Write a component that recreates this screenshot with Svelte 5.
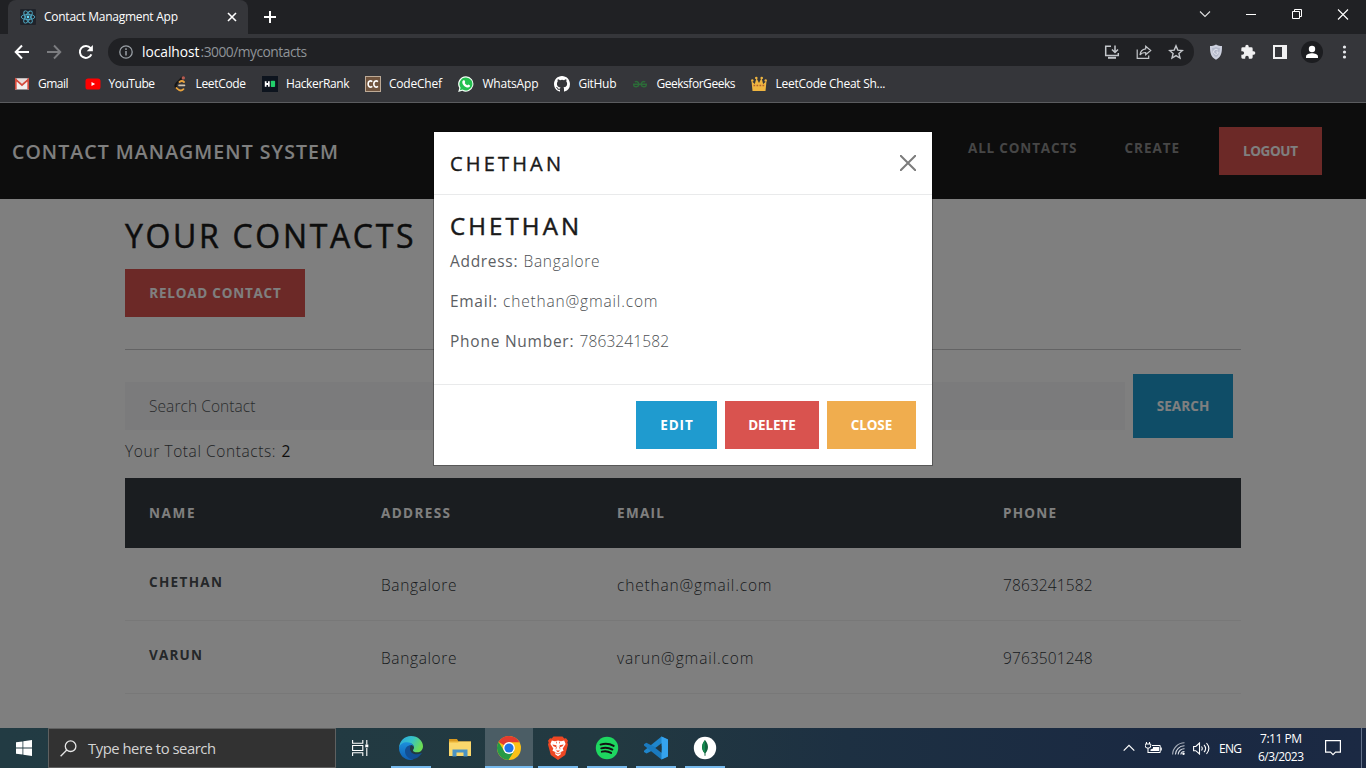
<script>
  // Tracks a text run so that it occupies the given width in pixels.
  function fit(node, width) {
    node.style.letterSpacing = '0px';
    const natural = node.getBoundingClientRect().width;
    const gaps = node.textContent.length - 1;
    const spacing = (width - natural) / gaps;
    node.style.letterSpacing = spacing.toFixed(3) + 'px';
    node.style.marginRight = (-spacing).toFixed(3) + 'px';
  }

  const bookmarks = [
    { id: 'gmail', label: 'Gmail', w: 30.500, gap: 16 },
    { id: 'youtube', label: 'YouTube', w: 46.500, gap: 16.500 },
    { id: 'leetcode', label: 'LeetCode', w: 50.500, gap: 16 },
    { id: 'hackerrank', label: 'HackerRank', w: 63.500, gap: 15.500 },
    { id: 'codechef', label: 'CodeChef', w: 53, gap: 16.500 },
    { id: 'whatsapp', label: 'WhatsApp', w: 56, gap: 16 },
    { id: 'github', label: 'GitHub', w: 38, gap: 16 },
    { id: 'gfg', label: 'GeeksforGeeks', w: 79, gap: 16 },
    { id: 'crown', label: 'LeetCode Cheat Sh...', w: 110, gap: 0 }
  ];

  const columns = [
    { label: 'NAME', w: 45.500 },
    { label: 'ADDRESS', w: 69 },
    { label: 'EMAIL', w: 47 },
    { label: 'PHONE', w: 53 }
  ];

  const rows = [
    { name: 'CHETHAN', nw: 73, address: 'Bangalore', email: 'chethan@gmail.com', ew: 154.500, phone: '7863241582' },
    { name: 'VARUN', nw: 53, address: 'Bangalore', email: 'varun@gmail.com', ew: 136.500, phone: '9763501248' }
  ];

  const details = [
    { label: 'Address:', lw: 67.500, value: 'Bangalore', vw: 76 },
    { label: 'Email:', lw: 47, value: 'chethan@gmail.com', vw: 154.500 },
    { label: 'Phone Number:', lw: 123.500, value: '7863241582', vw: 89.500 }
  ];

  const apps = ['edge', 'files', 'chrome', 'brave', 'spotify', 'vscode', 'mongo'];
</script>

<div class="screen">
  <header class="browser">
    <div class="tabs">
      <div class="tab">
        <svg class="fav" width="16" height="16" viewBox="0 0 16 16">
          <rect width="16" height="16" rx="1" fill="#20232a" />
          <g fill="none" stroke="#4fa9c4" stroke-width=".9">
            <ellipse cx="8" cy="8" rx="6.8" ry="2.6" />
            <ellipse cx="8" cy="8" rx="6.8" ry="2.6" transform="rotate(60 8 8)" />
            <ellipse cx="8" cy="8" rx="6.8" ry="2.6" transform="rotate(120 8 8)" />
          </g>
          <circle cx="8" cy="8" r="1.4" fill="#61dafb" />
        </svg>
        <span class="title" use:fit={134}>Contact Managment App</span>
        <svg class="tabx" width="10" height="10" viewBox="0 0 10 10"><path d="M1 1l8 8M9 1L1 9" stroke="#fff" stroke-width="1.6" /></svg>
      </div>
      <svg class="plus" width="14" height="14" viewBox="0 0 14 14"><path d="M7 1v12M1 7h12" stroke="#fff" stroke-width="2" /></svg>
      <div class="win">
        <svg width="46" height="30" viewBox="0 0 46 30"><path d="M18 11.5l5 5 5-5" fill="none" stroke="#dfdfe0" stroke-width="1.1" /></svg>
        <svg width="46" height="30" viewBox="0 0 46 30"><path d="M18 14.5h10" stroke="#fff" /></svg>
        <svg width="46" height="30" viewBox="0 0 46 30"><path d="M18.5 11.5h7v7h-7zM20.500 11.500v-2h7v7h-2" fill="none" stroke="#fff" /></svg>
        <svg width="46" height="30" viewBox="0 0 46 30"><path d="M18 9.500l10 10M28 9.500l-10 10" stroke="#fff" stroke-width="1.100" /></svg>
      </div>
    </div>

    <div class="toolbar">
      <svg class="tool" width="16" height="16" viewBox="0 0 16 16"><path d="M15 8H2.500M8 1.500L1.700 8 8 14.500" fill="none" stroke="#fff" stroke-width="2" /></svg>
      <svg class="tool" width="16" height="16" viewBox="0 0 16 16"><path d="M1 8h12.500M8 1.500L14.300 8 8 14.500" fill="none" stroke="#7c7d80" stroke-width="1.900" /></svg>
      <svg class="tool" width="16" height="16" viewBox="0 0 16 16"><path d="M13.400 10.300A6 6 0 1 1 12.600 4.200" fill="none" stroke="#fff" stroke-width="2" /><path d="M14.900 1v6.200H8.700z" fill="#fff" /></svg>
      <div class="omnibox">
        <svg width="14" height="14" viewBox="0 0 14 14"><circle cx="7" cy="7" r="6.200" fill="none" stroke="#9aa0a6" stroke-width="1.300" /><path d="M7 6v4.500M7 3.300v1.600" stroke="#9aa0a6" stroke-width="1.500" /></svg>
        <span class="host" use:fit={57.500}>localhost</span><span class="path" use:fit={106.500}>:3000/mycontacts</span>
        <div class="omni-icons">
          <svg width="16" height="16" viewBox="0 0 16 16" fill="none" stroke="#c4c7cb" stroke-width="1.500"><path d="M7 2.200H1.700v9.300h12.600V9" /><path d="M4 13.800h8" stroke-width="2" /><path d="M11 1.500v6.500M8 5.500l3 3 3-3" /></svg>
          <svg width="16" height="16" viewBox="0 0 16 16" fill="none" stroke="#c4c7cb" stroke-width="1.200"><path d="M1.200 5.500v8.800h11.500V11.500" /><path d="M9.700 2.200l5 4.300-5 4.200V8.500c-2.700 0-4.500.7-5.700 2.500.3-3.500 2.400-5.700 5.700-6.200z" /></svg>
          <svg width="16" height="16" viewBox="0 0 16 16" fill="none" stroke="#c4c7cb" stroke-width="1.400"><path d="M8 1.900l1.800 4.200 4.600.4-3.500 3 1.100 4.500L8 11.600 4 14l1.100-4.500-3.500-3 4.600-.4z" /></svg>
        </div>
      </div>
      <div class="ext">
        <svg width="16" height="16" viewBox="0 0 16 16"><path d="M8 .4c2 1.400 4 1.700 6 1.700 0 6-.4 11-6 13.700C2.400 13.100 2 8.100 2 2.100c2 0 4-.3 6-1.700z" fill="#ccd0de" /><path d="M8 3c1.200.6 2.600.9 3.900.9-.1 4.300-.9 7.500-3.900 9.300-3-1.800-3.800-5-3.900-9.300C5.400 3.900 6.800 3.600 8 3z" fill="#b4b9ca" /><path d="M9.800 6A2.500 2.500 0 1 0 10 9.400V8H8.200" fill="none" stroke="#e6e9f2" stroke-width=".9" /></svg>
        <svg width="16" height="16" viewBox="0 0 24 24"><path d="M20.500 11H19V7a2 2 0 0 0-2-2h-4V3.500a2.500 2.500 0 0 0-5 0V5H4a2 2 0 0 0-2 2v3.800h1.500a2.700 2.700 0 0 1 0 5.400H2V20a2 2 0 0 0 2 2h3.800v-1.500a2.700 2.700 0 0 1 5.400 0V22H17a2 2 0 0 0 2-2v-4h1.500a2.500 2.500 0 0 0 0-5z" fill="#f1f1f2" /></svg>
        <svg width="16" height="16" viewBox="0 0 16 16"><path d="M1 1h14v14H1zM3 3v10h7V3z" fill="#f1f1f2" fill-rule="evenodd" /></svg>
        <svg class="avatar" width="22" height="22" viewBox="0 0 22 22"><circle cx="11" cy="11" r="11" fill="#1c1d20" /><circle cx="11" cy="8" r="3.200" fill="#fff" /><path d="M5 17v-1.400c0-2.200 3.500-3.300 6-3.300s6 1.100 6 3.300V17z" fill="#fff" /></svg>
        <svg width="16" height="16" viewBox="0 0 16 16" fill="#e8eaed"><circle cx="8.500" cy="3" r="1.600" /><circle cx="8.500" cy="8" r="1.600" /><circle cx="8.500" cy="13" r="1.600" /></svg>
      </div>
    </div>

    <div class="bookmarks">
      {#each bookmarks as b}
        <span class="bm" style:margin-right="{b.gap}px">
          <svg width="16" height="16" viewBox="0 0 16 16">
            {#if b.id === 'gmail'}
              <path d="M1 2.500h14v11H1z" fill="#f3efee" /><path d="M1.800 13.500V3.500L8 9l6.200-5.500v10" fill="none" stroke="#d54b3d" stroke-width="1.700" /><path d="M2.500 2.500h11L8 7.500z" fill="#e9dedc" />
            {:else if b.id === 'youtube'}
              <rect x=".5" y="2.500" width="15" height="11" rx="2.600" fill="#f00" /><path d="M6.500 6v4l3.600-2z" fill="#fff" />
            {:else if b.id === 'leetcode'}
              <path d="M10.300 1.500L4.500 7.400c-1.400 1.500-1.400 3 0 4.400l1.500 1.500" fill="none" stroke="#171717" stroke-width="2" stroke-linecap="round" /><path d="M12 6C10.800 4.800 9 4.800 7.500 6M4.500 12l1.300 1.200c1.800 1.700 4 1.700 5.700-.1" fill="none" stroke="#e8a23c" stroke-width="1.800" stroke-linecap="round" /><path d="M7 9.400h5.500" stroke="#d5c5ae" stroke-width="1.600" stroke-linecap="round" /><circle cx="11.300" cy="1.900" r="1.700" fill="#b75b50" />
            {:else if b.id === 'hackerrank'}
              <rect width="16" height="16" fill="#0d141e" /><path d="M2.800 5.200h1.700v1.900H6V5.200h1.700v5.600H6V9H4.500v1.800H2.800z" fill="#fff" /><rect x="8.800" y="4.800" width="4.300" height="6.200" rx=".8" fill="#21cf6a" />
            {:else if b.id === 'codechef'}
              <rect x=".5" y=".5" width="15" height="15" fill="#70543e" stroke="#bdaa96" /><path d="M7.300 5.600C5 4 3.100 5.500 3.100 8s1.900 4 4.200 2.400M13 5.600C10.700 4 8.800 5.500 8.800 8s1.900 4 4.200 2.400" fill="none" stroke="#fff" stroke-width="1.600" />
            {:else if b.id === 'whatsapp'}
              <path d="M8 .2a7.700 7.700 0 1 1-3.700 14.600L.2 15.900l1.100-4A7.700 7.700 0 0 1 8 .2z" fill="#f4fff7" /><path d="M8 1.500a6.500 6.500 0 1 1-3.400 12.100l-2.700.7.700-2.600A6.500 6.500 0 0 1 8 1.500z" fill="#24c050" /><path d="M5.600 4.200c.5-.2.800 0 1 .4l.6 1.300c.1.500-.6.900-.5 1.200.5 1 1.300 1.800 2.400 2.200.5.100.8-.9 1.200-.8l1.500.8c.7.700-.4 2.400-1.900 2.300-2.800-.3-5.800-3.200-5.600-5.700.1-.8.800-1.500 1.300-1.700z" fill="#fff" />
            {:else if b.id === 'github'}
              <path d="M8 0C3.580 0 0 3.580 0 8c0 3.540 2.290 6.530 5.470 7.590.4.070.55-.17.55-.38 0-.19-.01-.82-.01-1.490-2.010.37-2.530-.49-2.690-.94-.09-.23-.48-.94-.82-1.130-.28-.15-.68-.52-.01-.53.63-.01 1.080.58 1.230.82.72 1.210 1.870.87 2.330.66.07-.52.28-.87.51-1.070-1.780-.2-3.640-.89-3.640-3.950 0-.87.31-1.590.82-2.150-.08-.2-.36-1.020.08-2.120 0 0 .67-.21 2.200.82a7.600 7.600 0 0 1 4 0c1.530-1.040 2.200-.82 2.200-.82.44 1.100.16 1.920.08 2.120.51.56.82 1.270.82 2.150 0 3.070-1.870 3.750-3.650 3.950.29.25.54.73.54 1.480 0 1.070-.01 1.930-.01 2.200 0 .21.15.46.55.38A8.010 8.010 0 0 0 16 8c0-4.420-3.580-8-8-8z" fill="#fff" />
            {:else if b.id === 'gfg'}
              <path d="M2.800 5.800c2-.9 4 .3 4 2.500 0 2.800-4.500 3.500-5.300.7M13.200 5.800c-2-.9-4 .3-4 2.500 0 2.800 4.500 3.500 5.300.7M1 8.300h14" fill="none" stroke="#2c6b38" stroke-width="1.400" />
            {:else}
              <path d="M1.500 15L.5 5l3.300 3L5.500 2l2.500 5 2.500-5 1.700 6 3.300-3-1 10z" fill="#efb540" /><circle cx="5.300" cy="2" r="1.300" fill="#efb540" /><circle cx="10.700" cy="2" r="1.300" fill="#efb540" /><circle cx="1.300" cy="4.500" r="1.200" fill="#efb540" /><circle cx="14.700" cy="4.500" r="1.200" fill="#efb540" /><path d="M2.500 9.500h11" stroke="#b0612e" stroke-width="1.500" stroke-dasharray="1.700 1.300" />
            {/if}
          </svg>
          <span use:fit={b.w}>{b.label}</span>
        </span>
      {/each}
    </div>
  </header>

  <main class="page">
    <nav class="navbar">
      <span class="brand" use:fit={326}>CONTACT MANAGMENT SYSTEM</span>
      <span class="link all" use:fit={108.500}>ALL CONTACTS</span>
      <span class="link" use:fit={54.500}>CREATE</span>
      <button class="btn danger logout"><span use:fit={55}>LOGOUT</span></button>
    </nav>

    <section class="content">
      <h1><span use:fit={288.500}>YOUR CONTACTS</span></h1>
      <button class="btn danger reload"><span use:fit={131.500}>RELOAD CONTACT</span></button>
      <hr />
      <div class="search">
        <div class="input"><span use:fit={106.500}>Search Contact</span></div>
        <button class="btn info find"><span use:fit={52.500}>SEARCH</span></button>
      </div>
      <p class="total"><span use:fit={150.500}>Your Total Contacts:</span><b>2</b></p>
      <div class="table">
        <div class="tr head">
          {#each columns as c}<span><span use:fit={c.w}>{c.label}</span></span>{/each}
        </div>
        {#each rows as r}
          <div class="tr">
            <span class="name"><span use:fit={r.nw}>{r.name}</span></span>
            <span><span use:fit={75.500}>{r.address}</span></span>
            <span><span use:fit={r.ew}>{r.email}</span></span>
            <span><span use:fit={89.500}>{r.phone}</span></span>
          </div>
        {/each}
      </div>
    </section>

    <div class="backdrop">
      <div class="modal">
        <div class="modal-head">
          <span use:fit={111}>CHETHAN</span>
          <svg width="16" height="16" viewBox="0 0 16 16"><path d="M.7.700l14.600 14.600M15.300.7L.7 15.300" stroke="#7c7c7c" stroke-width="2" stroke-linecap="round" /></svg>
        </div>
        <div class="modal-body">
          <h4><span use:fit={129}>CHETHAN</span></h4>
          {#each details as d}
            <p><b use:fit={d.lw}>{d.label}</b><span class="value" use:fit={d.vw}>{d.value}</span></p>
          {/each}
        </div>
        <div class="modal-foot">
          <button class="btn info edit"><span use:fit={32.500}>EDIT</span></button>
          <button class="btn danger delete"><span use:fit={47.500}>DELETE</span></button>
          <button class="btn warning close"><span use:fit={41.500}>CLOSE</span></button>
        </div>
      </div>
    </div>
  </main>

  <footer class="taskbar">
    <div class="start">
      <svg width="16" height="16" viewBox="0 0 16 16" fill="#fff"><path d="M0 2.300l6.500-.9v6.200H0zM7.300 1.300L16 0v7.600H7.300zM0 8.400h6.500v6.200L0 13.700zM7.300 8.400H16V16l-8.700-1.300z" /></svg>
    </div>
    <div class="tsearch">
      <svg width="17" height="17" viewBox="0 0 17 17" fill="none" stroke="#e6e6e6" stroke-width="1.300"><circle cx="10.600" cy="6.200" r="5.300" /><path d="M6.800 10L.6 16.300" /></svg>
      <span use:fit={128}>Type here to search</span>
    </div>
    <div class="taskview">
      <svg width="17" height="16" viewBox="0 0 17 16" fill="none" stroke="#fff" stroke-width="1.100"><path d="M.6 0v3.200h10.200V0M.6 16v-3.200h10.200V16M.6 5.500h10.200v5H.6zM14.800 0v4.500M14.800 8v8" /><path d="M13.300 4.500h3v2.800h-3z" fill="#fff" stroke="none" /></svg>
    </div>
    {#each apps as a}
      <div class="app {a}">
        <svg width="24" height="24" viewBox="0 0 24 24">
          {#if a === 'edge'}
            <defs>
              <linearGradient id="eg" x1="0" y1="0" x2="1" y2=".4"><stop offset="0" stop-color="#2aa5e0" /><stop offset=".55" stop-color="#36c2c8" /><stop offset="1" stop-color="#6bdc55" /></linearGradient>
              <linearGradient id="eb" x1="0" y1="0" x2="0" y2="1"><stop offset="0" stop-color="#1c8fdc" /><stop offset="1" stop-color="#0f5fb3" /></linearGradient>
            </defs>
            <path d="M0 12C.4 5.300 5.200 0 12 0c7 0 12 5 12 10.200 0 3.800-2.700 6.100-5.800 6.100-2.600 0-4.200-.9-4.200-1.900 0-.8 1-1.100 1-2.800C15 9 12.600 7.100 9 7.100 4.500 7.100 1.300 9.500 0 12z" fill="url(#eg)" />
            <path d="M0 12c.8-4 4.500-6 8.500-5.800 3.900.2 6.500 2.500 6.500 5.400-.2-1.500-1.500-2.500-3-2.500-4.500 2-5 9.500 1 13.500l1.500.9C6.500 25.500 0 19.500 0 12z" fill="url(#eb)" />
            <path d="M12 9.100c-5.500.5-8 6.500-4 11.400 3 3.500 9 4.500 14.400-2.700.5-.6 0-1-.6-.6-4.800 2.500-10.300.3-10.800-4-.1-1.800.3-2.900 1-4.100z" fill="#124f94" />
          {:else if a === 'files'}
            <path d="M1 3h8l1.500 2.500H23v13H1z" fill="#d9991f" /><path d="M1 5.500h10L9.500 7.500H1z" fill="#f4c64e" /><path d="M1 7h8.500L11 5.500h12V20H1z" fill="#fbd86c" /><path d="M4.500 20.500v-7h15v7h-4v-4h-7v4z" fill="#4b93c4" />
          {:else if a === 'chrome'}
            <circle cx="12" cy="12" r="12" fill="#fbc116" /><path d="M12 12L1.600 6A12 12 0 0 1 22.400 6.200H12z" fill="#e33b2e" /><path d="M1.600 6A12 12 0 0 0 11.500 24l5.700-9L7.500 15.500z" fill="#269a47" /><circle cx="12" cy="12" r="5.900" fill="#fff" /><circle cx="12" cy="12" r="4.600" fill="#1f73e8" />
          {:else if a === 'brave'}
            <path d="M7.500 .5h9l1.800 2 1.700-.2L22 4.800 21.300 6.500l.7 2-2.800 10.500L12 24l-7.200-5L2 8.500l.7-2L2 4.800l2-2.500 1.700.2z" fill="#ee4723" />
            <path d="M5.800 4.500l3.200.7 3-.7 3 .7 3.200-.7L19.600 8l-2.900 4.500.8 2.300-2.300 1-.4 2.400L12 20.300l-2.800-2.100-.4-2.400-2.300-1 .8-2.300L4.400 8z" fill="#fff" />
            <path d="M6.300 8.400l4.200.9-.5 1.900-2.500-.9zM17.700 8.400l-4.200.9.5 1.900 2.500-.9z" fill="#ee4723" /><path d="M9.800 14.600h4.400L12 16.300zM10 5.800h1l-.3 2.400zM14 5.800h-1l.3 2.400z" fill="#ee4723" /><path d="M10.700 10.500l-.8 2.800M13.300 10.500l.8 2.800M9 16.700l3 1.200 3-1.200" fill="none" stroke="#ee4723" stroke-width=".7" />
          {:else if a === 'spotify'}
            <circle cx="12" cy="12" r="11.200" fill="#1ed760" /><path d="M5.500 8.600c4.500-1.300 9.300-.9 13.200 1.300M6.200 12.300c3.800-1.100 7.700-.7 11.200 1.300M6.800 15.700c3.200-.8 6.400-.5 9.300 1.200" fill="none" stroke="#121212" stroke-width="1.900" stroke-linecap="round" />
          {:else if a === 'vscode'}
            <path d="M17.500.5L24 3.500v3L2.500 17.500 0 16v-1.300z" fill="#1f86cc" /><path d="M0 8.200l2.300-1.500L24 17.500v3l-6.500 3L0 9.500z" fill="#1a7abf" /><path d="M17.500.5L24 3.500v17l-6.500 3z" fill="#35a3ee" /><path d="M17.500 7.200v9.600L11.300 12z" fill="#21363f" />
          {:else}
            <circle cx="12" cy="12" r="11.200" fill="#fff" /><path d="M12 4c3.200 3.500 4.500 8.500.5 13.300V19.800h-1v-2.500C7.500 12.500 8.800 7.500 12 4z" fill="#12633f" /><path d="M12 4v13.500c-4-4.500-3.200-10 0-13.500z" fill="#148a4f" />
          {/if}
        </svg>
      </div>
    {/each}
    <div class="tray">
      <svg class="up" width="12" height="8" viewBox="0 0 12 8"><path d="M.7 6.700L6 1.400l5.300 5.300" fill="none" stroke="#fff" stroke-width="1.200" /></svg>
      <svg class="bat" width="17" height="13" viewBox="0 0 17 13"><path d="M1.500 0v2M4.500 0v2M3 6v4.500h2" fill="none" stroke="#fff" stroke-width="1.100" /><path d="M.3 2h5.400v1.800A2 2 0 0 1 3.700 6H2.300a2 2 0 0 1-2-2.200z" fill="none" stroke="#fff" /><path d="M7 3.500h8.200v7H4.500" fill="none" stroke="#fff" /><path d="M15.500 5.500h1.300v3h-1.300zM8 5h6v4H5.500V7.500L8 6.500z" fill="#fff" /></svg>
      <svg class="wifi" width="13" height="13" viewBox="0 0 13 13" fill="none" stroke="#d5d9e0" stroke-width="1.100"><path d="M.6 12.500A12 12 0 0 1 12.500.8" opacity=".75" /><path d="M3.400 12.500a9 9 0 0 1 9.100-8.700M6.200 12.500a6 6 0 0 1 6.300-5.800M8.800 12.500a3.400 3.400 0 0 1 3.700-3" /><circle cx="11.500" cy="11.700" r="1.200" fill="#fff" stroke="none" /></svg>
      <svg class="vol" width="17" height="13" viewBox="0 0 17 13" fill="none" stroke="#fff" stroke-width="1.100"><path d="M.6 4.500h2.200L6.500 1v11L2.800 8.700H.6z" /><path d="M8.500 4.500c1 1.300 1 2.700 0 4M11 2.800c2 2.300 2 5.100 0 7.400M13.500 1c3 3.500 3 7.500 0 11" /></svg>
      <span class="eng" use:fit={23}>ENG</span>
      <div class="clock"><span><span use:fit={42}>7:11 PM</span></span><span><span use:fit={46}>6/3/2023</span></span></div>
      <svg class="note" width="16" height="16" viewBox="0 0 16 16"><path d="M.6.600h14.800v11.600H10.500L8 14.700l-2.500-2.500H.6z" fill="none" stroke="#fff" stroke-width="1.200" /></svg>
      <i class="peek"></i>
    </div>
  </footer>
</div>

<style>
  :global(body) { margin: 0; overflow: hidden; }
  .screen { width: 1366px; height: 768px; display: flex; flex-direction: column; overflow: hidden; font-family: "Open Sans", "Noto Sans", sans-serif; white-space: nowrap; }
  .screen * { box-sizing: border-box; }
  svg { display: block; flex: none; }
  span, b { flex: none; }

  .browser { height: 103px; flex: none; background: #35363a; border-bottom: 1px solid #5b5c5f; color: #fff; }
  .tabs { height: 34px; background: #202124; display: flex; align-items: center; padding-left: 8px; }
  .tab { width: 240px; height: 34px; background: #35363a; border-radius: 8px 8px 0 0; display: flex; align-items: center; padding: 0 11px 0 12px; }
  .title { font-size: 12px; margin-left: 8px; padding-bottom: 1px; }
  .tabx { margin-left: auto; }
  .plus { margin-left: 15px; }
  .win { display: flex; margin-left: auto; align-self: flex-start; }
  .toolbar { height: 36px; display: flex; align-items: center; padding-left: 14px; }
  .tool { margin-right: 16px; }
  .omnibox { width: 1086px; height: 28px; margin-left: -2px; border-radius: 14px; background: #202124; display: flex; align-items: center; padding: 0 10px 0 11px; font-size: 13.800px; }
  .host, .path { padding-bottom: 1px; }
  .host { margin-left: 9px; }
  .path { color: #8f9398; margin-left: 1px; }
  .omni-icons { display: flex; gap: 16px; margin-left: auto; }
  .ext { display: flex; align-items: center; gap: 16px; padding-left: 14px; }
  .avatar { margin: 0 -3px; }
  .bookmarks { height: 28px; display: flex; align-items: center; padding-left: 14px; font-size: 12px; }
  .bm { display: flex; align-items: center; gap: 8px; }
  .bm > span { padding-bottom: 1px; }

  .page { height: 625px; flex: none; position: relative; background: #fff; color: #55595c; }
  .navbar { height: 96px; background: #1a1a1a; display: flex; align-items: center; padding: 0 44px 0 12px; }
  .brand { color: #fff; font-weight: 600; font-size: 19.500px; }
  .link { color: #8c8c8c; font-weight: 700; font-size: 13.500px; margin-left: 48px; padding-bottom: 6px; }
  .link.all { margin-left: auto; }
  .btn { height: 48px; border: 0; padding: 0; border-radius: 0; color: #fff; font: 700 13.500px "Open Sans", "Noto Sans", sans-serif; display: flex; align-items: center; justify-content: center; }
  .danger { background: #d9534f; }
  .info { background: #1f9bcf; }
  .warning { background: #f0ad4e; }
  .logout { width: 103px; margin-left: 40px; }
  .content { padding: 16px 125px 0; }
  h1 { margin: 0; height: 40px; line-height: 42px; font-size: 32px; font-weight: 400; color: #1a1a1a; -webkit-text-stroke: .5px #1a1a1a; }
  .reload { width: 180px; margin-top: 14px; }
  hr { margin: 32px 0 24px; border: 0; height: 1px; background: #c6c7c8; }
  .search { display: flex; align-items: center; gap: 8px; }
  .input { width: 1000px; height: 48px; background: #f7f7f9; padding-left: 24px; display: flex; align-items: center; font-size: 15.500px; font-weight: 300; color: #55595c; }
  .find { width: 100px; height: 64px; }
  .total { margin: 0; height: 40px; display: flex; align-items: center; padding-bottom: 14px; font-size: 15.500px; font-weight: 300; color: #44484b; }
  .total b { font-weight: 400; font-size: 15.500px; margin-left: 6px; color: #1a1a1a; }
  .tr { display: grid; grid-template-columns: 232px 236px 386px 262px; height: 73px; align-items: center; padding-top: 1px; border-bottom: 1px solid #f0f0f0; font-size: 15.500px; font-weight: 300; color: #33383c; }
  .tr > span { padding-left: 24px; }
  .tr .name { font-size: 13.500px; font-weight: 700; padding-bottom: 5px; color: #4a4f53; }
  .tr.head { height: 70px; background: #343a40; color: #fff; font-size: 13.500px; font-weight: 700; border: 0; padding: 0 0 1px; }

  .backdrop { position: absolute; inset: 0; background: rgba(0, 0, 0, .5); display: flex; justify-content: center; align-items: flex-start; padding-top: 28px; }
  .modal { width: 500px; height: 335px; background: #fff; background-clip: padding-box; border: 1px solid rgba(0, 0, 0, .3); }
  .modal-head { height: 63px; border-bottom: 1px solid #e9eaeb; padding: 1px 16px 0; display: flex; align-items: center; justify-content: space-between; font-size: 20px; color: #1a1a1a; -webkit-text-stroke: .4px #1a1a1a; }
  .modal-head svg { margin-top: -1px; }
  .modal-body { height: 189px; padding: 16px 16px 0; }
  h4 { margin: 0 0 9px; height: 29px; line-height: 29px; font-size: 24px; font-weight: 400; color: #1a1a1a; -webkit-text-stroke: .5px #1a1a1a; }
  .modal-body p { margin: 0 0 16px; height: 24px; display: flex; align-items: center; font-size: 15.500px; font-weight: 300; color: #4c5053; }
  .modal-body b { font-weight: 400; color: #5c6063; }
  .value { margin-left: 6px; }
  .modal-foot { height: 81px; border-top: 1px solid #e9eaeb; padding: 16px; display: flex; justify-content: flex-end; gap: 8px; }
  .edit { width: 81px; }
  .delete { width: 94px; }
  .close { width: 89px; }

  .taskbar { height: 40px; flex: none; display: flex; color: #fff; background: linear-gradient(90deg, #223b43 0, #223941 45%, #1d3042 62%, #1a2942 85%, #1b2943 100%); }
  .start { width: 48px; display: flex; align-items: center; justify-content: center; }
  .tsearch { width: 288px; background: #323232; border: 1px solid #5f6060; display: flex; align-items: center; padding-left: 11px; font-size: 14.800px; color: #d4d4d4; }
  .tsearch span { margin-left: 11px; }
  .taskview { width: 50px; display: flex; align-items: center; justify-content: center; padding-right: 2px; }
  .app { width: 49px; display: flex; align-items: center; justify-content: center; background: linear-gradient(#76b9ed, #76b9ed) center bottom / 40px 2px no-repeat; }
  .files { background: none; }
  .chrome { width: 48px; margin: 0 0 0 1px; background: linear-gradient(#76b9ed, #76b9ed) center bottom / 48px 2px no-repeat, #4b5d65; }
  .tray { margin-left: auto; width: 243px; display: flex; align-items: center; font-size: 12px; }
  .bat { margin-left: 10px; }
  .wifi { margin-left: 10px; }
  .vol { margin-left: 8px; }
  .eng { margin-left: 9px; }
  .clock { width: 48px; margin-left: 15px; display: flex; flex-direction: column; align-items: center; line-height: 18px; padding-bottom: 1px; }
  .note { margin-left: 20px; }
  .peek { width: 1px; height: 40px; background: #64728a; margin-left: 20px; }
</style>
